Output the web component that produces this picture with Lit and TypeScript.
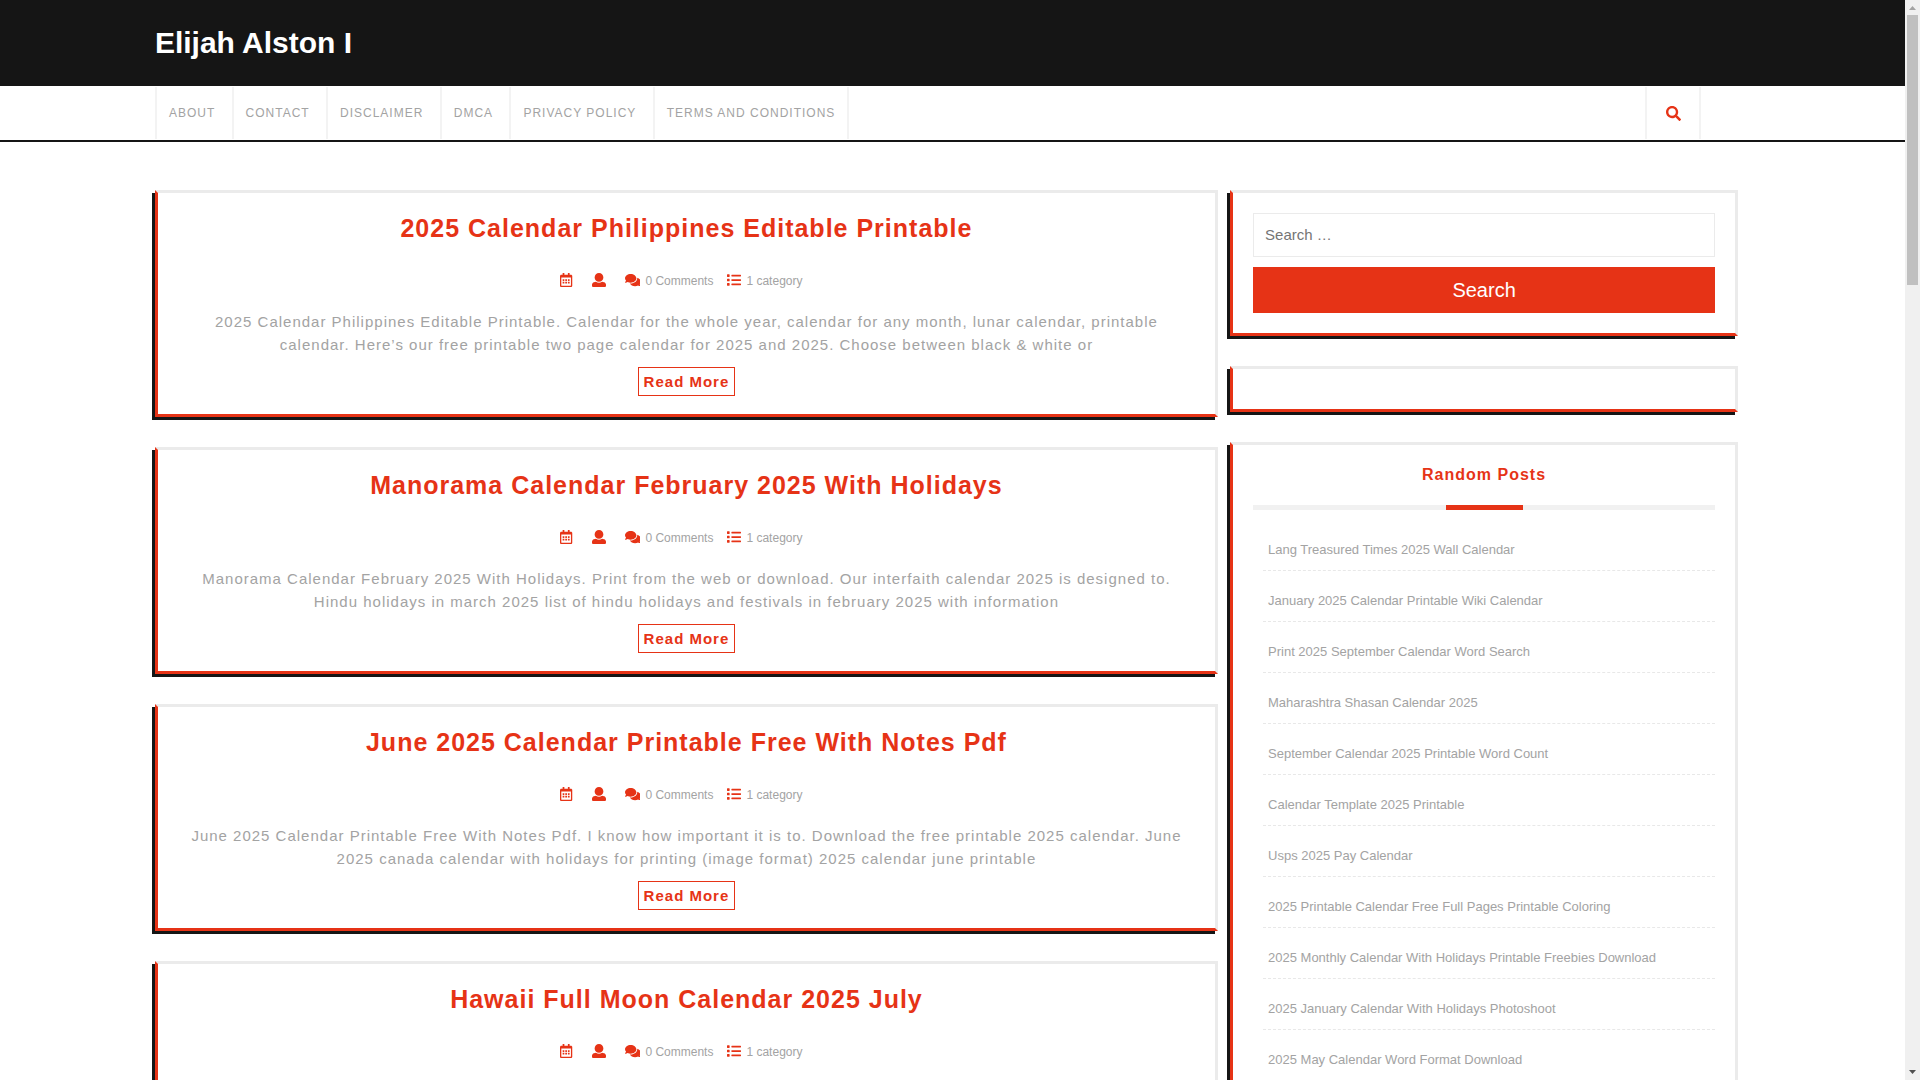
import { LitElement, html, css, svg } from "lit";
import { customElement, property } from "lit/decorators.js";

const ICONS: Record<string, { w: number; d: string }> = {
  search: {
    w: 512,
    d: "M505 442.7L405.3 343c-4.5-4.5-10.6-7-17-7H372c27.6-35.3 44-79.7 44-128C416 93.1 322.9 0 208 0S0 93.1 0 208s93.1 208 208 208c48.3 0 92.7-16.4 128-44v16.3c0 6.4 2.5 12.5 7 17l99.7 99.7c9.4 9.4 24.6 9.4 33.9 0l28.3-28.3c9.4-9.4 9.4-24.6.1-34zM208 336c-70.7 0-128-57.2-128-128 0-70.7 57.2-128 128-128 70.7 0 128 57.2 128 128 0 70.7-57.2 128-128 128z",
  },
  calendar: {
    w: 448,
    d: "M148 288h-40c-6.6 0-12-5.4-12-12v-40c0-6.6 5.4-12 12-12h40c6.6 0 12 5.4 12 12v40c0 6.6-5.4 12-12 12zm108-12v-40c0-6.6-5.4-12-12-12h-40c-6.6 0-12 5.4-12 12v40c0 6.6 5.4 12 12 12h40c6.6 0 12-5.4 12-12zm96 0v-40c0-6.6-5.4-12-12-12h-40c-6.6 0-12 5.4-12 12v40c0 6.6 5.4 12 12 12h40c6.6 0 12-5.4 12-12zm-96 96v-40c0-6.6-5.4-12-12-12h-40c-6.6 0-12 5.4-12 12v40c0 6.6 5.4 12 12 12h40c6.6 0 12-5.4 12-12zm-96 0v-40c0-6.6-5.4-12-12-12h-40c-6.6 0-12 5.4-12 12v40c0 6.6 5.4 12 12 12h40c6.6 0 12-5.4 12-12zm192 0v-40c0-6.6-5.4-12-12-12h-40c-6.6 0-12 5.4-12 12v40c0 6.6 5.4 12 12 12h40c6.6 0 12-5.4 12-12zm96-260v352c0 26.5-21.5 48-48 48H48c-26.5 0-48-21.5-48-48V112c0-26.5 21.5-48 48-48h48V12c0-6.6 5.4-12 12-12h40c6.6 0 12 5.4 12 12v52h128V12c0-6.6 5.4-12 12-12h40c6.6 0 12 5.4 12 12v52h48c26.5 0 48 21.5 48 48zm-48 346V160H48v298c0 3.3 2.7 6 6 6h340c3.3 0 6-2.7 6-6z",
  },
  user: {
    w: 512,
    d: "M256 0c88.366 0 160 71.634 160 160s-71.634 160-160 160S96 248.366 96 160 167.634 0 256 0zm183.283 333.821l-71.313-17.828c-74.923 53.89-165.738 41.864-223.94 0l-71.313 17.828C29.981 344.505 0 382.903 0 426.955V464c0 26.51 21.49 48 48 48h416c26.51 0 48-21.49 48-48v-37.045c0-44.052-29.981-82.45-72.717-93.134z",
  },
  comments: {
    w: 576,
    d: "M416 192c0-88.4-93.1-160-208-160S0 103.6 0 192c0 34.3 14.1 65.9 38 92-13.4 30.2-35.5 54.2-35.8 54.5-2.2 2.3-2.8 5.7-1.5 8.7S4.8 352 8 352c36.6 0 66.9-12.3 88.7-25 32.2 15.7 70.3 25 111.3 25 114.9 0 208-71.6 208-160zm122 220c23.9-26 38-57.7 38-92 0-66.9-53.5-124.2-129.3-148.1.9 6.6 1.3 13.3 1.3 20.1 0 105.9-107.7 192-240 192-10.8 0-21.3-.8-31.7-1.9C207.8 439.6 281.8 480 368 480c41 0 79.1-9.2 111.3-25 21.8 12.7 52.1 25 88.7 25 3.2 0 6.1-1.9 7.3-4.8 1.3-2.9.7-6.3-1.5-8.7-.3-.3-22.4-24.2-35.8-54.5z",
  },
  list: {
    w: 512,
    d: "M80 368H16a16 16 0 0 0-16 16v64a16 16 0 0 0 16 16h64a16 16 0 0 0 16-16v-64a16 16 0 0 0-16-16zm0-320H16A16 16 0 0 0 0 64v64a16 16 0 0 0 16 16h64a16 16 0 0 0 16-16V64a16 16 0 0 0-16-16zm0 160H16a16 16 0 0 0-16 16v64a16 16 0 0 0 16 16h64a16 16 0 0 0 16-16v-64a16 16 0 0 0-16-16zm416 176H176a16 16 0 0 0-16 16v32a16 16 0 0 0 16 16h320a16 16 0 0 0 16-16v-32a16 16 0 0 0-16-16zm0-320H176a16 16 0 0 0-16 16v32a16 16 0 0 0 16 16h320a16 16 0 0 0 16-16V80a16 16 0 0 0-16-16zm0 160H176a16 16 0 0 0-16 16v32a16 16 0 0 0 16 16h320a16 16 0 0 0 16-16v-32a16 16 0 0 0-16-16z",
  },
};

const icon = (name: string) => html`<svg class="icon" viewBox="0 0 ${ICONS[name].w} 512" aria-hidden="true">
  ${svg`<path d=${ICONS[name].d}></path>`}
</svg>`;

const NAV = ["About", "Contact", "Disclaimer", "DMCA", "Privacy Policy", "Terms and Conditions"];

interface Post {
  title: string;
  excerpt: string;
}

const POSTS: Post[] = [
  {
    title: "2025 Calendar Philippines Editable Printable",
    excerpt:
      "2025 Calendar Philippines Editable Printable. Calendar for the whole year, calendar for any month, lunar calendar, printable calendar. Here’s our free printable two page calendar for 2025 and 2025. Choose between black & white or",
  },
  {
    title: "Manorama Calendar February 2025 With Holidays",
    excerpt:
      "Manorama Calendar February 2025 With Holidays. Print from the web or download. Our interfaith calendar 2025 is designed to. Hindu holidays in march 2025 list of hindu holidays and festivals in february 2025 with information",
  },
  {
    title: "June 2025 Calendar Printable Free With Notes Pdf",
    excerpt:
      "June 2025 Calendar Printable Free With Notes Pdf. I know how important it is to. Download the free printable 2025 calendar. June 2025 canada calendar with holidays for printing (image format) 2025 calendar june printable",
  },
  {
    title: "Hawaii Full Moon Calendar 2025 July",
    excerpt:
      "Hawaii Full Moon Calendar 2025 July. Moon phases for every day of the month, with the dates and local times of the new moon, first quarter, full moon and last quarter in july 2025",
  },
];

const RANDOM_POSTS = [
  "Lang Treasured Times 2025 Wall Calendar",
  "January 2025 Calendar Printable Wiki Calendar",
  "Print 2025 September Calendar Word Search",
  "Maharashtra Shasan Calendar 2025",
  "September Calendar 2025 Printable Word Count",
  "Calendar Template 2025 Printable",
  "Usps 2025 Pay Calendar",
  "2025 Printable Calendar Free Full Pages Printable Coloring",
  "2025 Monthly Calendar With Holidays Printable Freebies Download",
  "2025 January Calendar With Holidays Photoshoot",
  "2025 May Calendar Word Format Download",
];

const shared = css`
  * {
    box-sizing: border-box;
  }
  a {
    color: inherit;
    text-decoration: none;
  }
  .icon {
    height: 15px;
    fill: #e63316;
    flex: none;
    display: block;
  }
  .card {
    border: 3px solid #ebebeb;
    border-left-color: #e63316;
    border-bottom-color: #e63316;
    box-shadow: -3px 3px 0 #151515;
    background: #fff;
  }
`;

@customElement("post-card")
export class PostCard extends LitElement {
  @property({ attribute: false }) post!: Post;

  static styles = [
    shared,
    css`
      :host {
        display: block;
      }
      .card {
        padding: 20px 20px 18px;
        text-align: center;
      }
      .title {
        margin: 0;
        color: #e63316;
        font-size: 25px;
        line-height: 30px;
        letter-spacing: 1px;
      }
      .meta {
        display: flex;
        justify-content: center;
        align-items: center;
        gap: 19px;
        height: 24px;
        margin: 26px 0 18px;
        padding-right: 10px;
        font-size: 12px;
      }
      .meta .icon {
        height: 14px;
        margin-bottom: 2px;
      }
      .group {
        display: flex;
        gap: 14px;
      }
      .entry {
        display: flex;
        align-items: center;
        gap: 5px;
      }
      .excerpt {
        margin: 0 0 11px;
        font-size: 15px;
        line-height: 1.5;
        letter-spacing: 1px;
      }
      .more {
        display: inline-block;
        border: 1px solid #e63316;
        padding: 5px;
        color: #e63316;
        font-size: 15px;
        font-weight: bold;
        line-height: 17px;
        letter-spacing: 1px;
        vertical-align: top;
      }
    `,
  ];

  render() {
    return html`<article class="card">
      <h2 class="title"><a href="#">${this.post.title}</a></h2>
      <div class="meta">
        ${icon("calendar")} ${icon("user")}
        <div class="group">
          <span class="entry">${icon("comments")}0 Comments</span>
          <span class="entry">${icon("list")}1 category</span>
        </div>
      </div>
      <p class="excerpt">${this.post.excerpt}</p>
      <a class="more" href="#">Read More</a>
    </article>`;
  }
}

@customElement("site-sidebar")
export class SiteSidebar extends LitElement {
  static styles = [
    shared,
    css`
      :host {
        display: flex;
        flex-direction: column;
        gap: 30px;
      }
      .card {
        padding: 20px;
      }
      .form {
        display: flex;
        flex-direction: column;
        gap: 10px;
      }
      .field {
        width: 100%;
        height: 44px;
        margin: 0;
        padding: 0 11px 2px;
        border: 1px solid #ebebeb;
        border-radius: 0;
        font: 15px "Liberation Sans", Arial, sans-serif;
        color: #757575;
      }
      .field::placeholder {
        color: #757575;
      }
      .submit {
        height: 46px;
        border: 0;
        padding: 0;
        background: #e63316;
        color: #fff;
        font: 20px "Liberation Sans", Arial, sans-serif;
      }
      .title {
        margin: 0;
        color: #e63316;
        text-align: center;
        font-size: 16px;
        line-height: 20px;
        letter-spacing: 1px;
      }
      .rule {
        height: 5px;
        margin: 20px 0 10px;
        background: #f1f1f1;
        display: flex;
        justify-content: center;
      }
      .rule::after {
        content: "";
        width: 77px;
        background: #e63316;
      }
      .posts {
        list-style: none;
        margin: 0 0 0 10px;
        padding: 0;
      }
      .item {
        padding: 17px 5px 7px;
        border-bottom: 1px dashed #e8e8e8;
        font-size: 13px;
        line-height: 26px;
      }
    `,
  ];

  render() {
    return html`
      <section class="card">
        <form class="form" @submit=${(e: Event) => e.preventDefault()}>
          <input class="field" type="search" aria-label="Search" placeholder="Search …" />
          <button class="submit">Search</button>
        </form>
      </section>
      <section class="card"></section>
      <section class="card">
        <h3 class="title">Random Posts</h3>
        <div class="rule"></div>
        <ul class="posts">
          ${RANDOM_POSTS.map((p) => html`<li class="item"><a href="#">${p}</a></li>`)}
        </ul>
      </section>
    `;
  }
}

@customElement("app-root")
export class AppRoot extends LitElement {
  static styles = [
    shared,
    css`
      :host {
        display: grid;
        grid-template-columns: minmax(0, 1fr) 15px;
        height: 100vh;
        background: #fff;
        color: #a3a3a3;
        font-family: "Liberation Sans", Arial, sans-serif;
      }
      .page {
        overflow-y: auto;
        scrollbar-width: none;
      }
      .inner {
        width: 85%;
        margin: 0 auto;
        padding: 0 24px 0 12px;
      }
      .banner {
        background: #151515;
        padding: 25px 0;
      }
      .brand {
        margin: 0;
        color: #fff;
        font-size: 30px;
        line-height: 36px;
      }
      .bar {
        padding: 1px 0;
        border-bottom: 2px solid #151515;
      }
      .bar-row {
        display: flex;
        justify-content: space-between;
        align-items: stretch;
      }
      .menu {
        font-size: 12px;
        line-height: 52px;
        letter-spacing: 1px;
        text-transform: uppercase;
      }
      .link {
        display: inline-block;
        border-left: 2px solid #f3f3f3;
        padding: 0 12px;
        vertical-align: top;
      }
      .link:last-child {
        border-right: 2px solid #f3f3f3;
      }
      .find {
        width: 56px;
        margin: 0 37px 0 0;
        padding: 0;
        border: solid #f3f3f3;
        border-width: 0 2px;
        background: none;
        display: flex;
        align-items: center;
        justify-content: center;
      }
      .columns {
        display: grid;
        grid-template-columns: minmax(0, 1063fr) minmax(0, 508fr);
        align-items: start;
        gap: 12px;
        padding-top: 48px;
        padding-bottom: 30px;
      }
      .feed {
        display: grid;
        gap: 30px;
      }
      .scroll {
        display: grid;
        grid-template-rows: 15px 1fr 15px;
        background: #f0f0f0;
      }
      .arrow {
        width: 15px;
        height: 15px;
      }
      .thumb {
        width: 11px;
        height: calc(100% * 9 / 35);
        margin: 0 auto;
        background: #c0c0c0;
      }
    `,
  ];

  render() {
    return html`
      <div class="page">
        <header>
          <div class="banner">
            <div class="inner"><h1 class="brand"><a href="#">Elijah Alston I</a></h1></div>
          </div>
          <div class="bar">
            <div class="inner bar-row">
              <nav class="menu">${NAV.map((n) => html`<a class="link" href="#">${n}</a> `)}</nav>
              <button class="find" aria-label="Open search">${icon("search")}</button>
            </div>
          </div>
        </header>
        <main class="inner columns">
          <div class="feed">${POSTS.map((p) => html`<post-card .post=${p}></post-card>`)}</div>
          <site-sidebar></site-sidebar>
        </main>
      </div>
      <div class="scroll" aria-hidden="true">
        <svg class="arrow" viewBox="0 0 15 15"><path d="M4 10h7L7.500 6z" fill="#a3a3a3" /></svg>
        <div class="thumb"></div>
        <svg class="arrow" viewBox="0 0 15 15"><path d="M4 5h7L7.500 9z" fill="#505050" /></svg>
      </div>
    `;
  }
}
